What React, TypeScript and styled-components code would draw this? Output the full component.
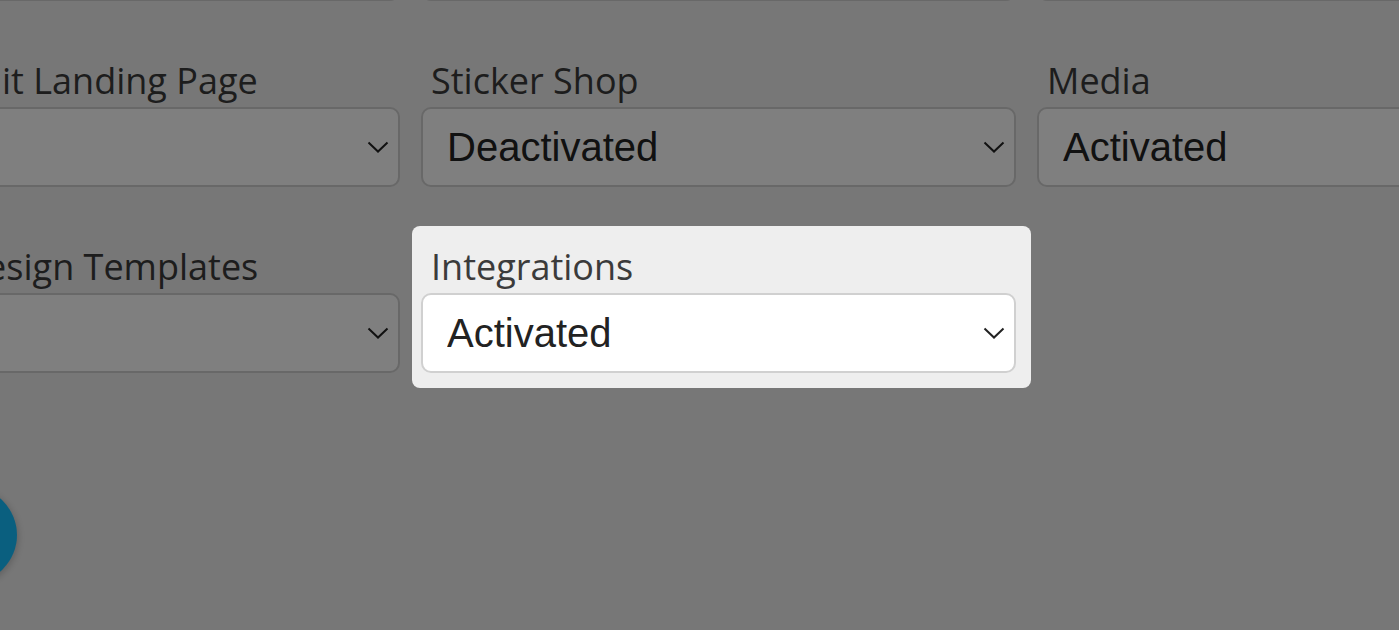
import React from "react";
import styled, { createGlobalStyle } from "styled-components";

const Global = createGlobalStyle`
  html, body {
    margin: 0;
    padding: 0;
    width: 100%;
    height: 100%;
    overflow: hidden;
    background: #eeeeee;
  }
  * { box-sizing: border-box; }
`;

const Page = styled.div`
  width: 1399px;
  height: 630px;
  overflow: hidden;
  position: relative;
  background: #eeeeee;
`;

const Grid = styled.div`
  display: grid;
  grid-template-columns: 450px 595px 595px;
  column-gap: 21px;
  row-gap: 57px;
  margin-left: -50px;
  margin-top: -128px;
  width: max-content;
`;

const Field = styled.div<{ $spot?: boolean }>`
  display: flex;
  flex-direction: column;
  gap: 4px;
  position: relative;
  ${(p) =>
    p.$spot &&
    `
    z-index: 20;
    isolation: isolate;
    &::before {
      content: "";
      position: absolute;
      top: -18px;
      left: -9px;
      right: -15px;
      bottom: -15px;
      background: #eeeeee;
      border-radius: 8px;
      z-index: -1;
    }
  `}
`;

const Label = styled.label`
  font-family: "Open Sans", "Noto Sans", sans-serif;
  font-size: 36px;
  line-height: 45px;
  height: 45px;
  color: #3b3b3b;
  padding-left: 10px;
  white-space: nowrap;
`;

const SelectWrap = styled.div`
  position: relative;
  height: 80px;
`;

const Select = styled.select`
  appearance: none;
  -webkit-appearance: none;
  width: 100%;
  height: 80px;
  margin: 0;
  padding: 0 60px 0 24px;
  border: 2px solid #d0d0d0;
  border-radius: 10px;
  background: #ffffff;
  font-family: "Liberation Sans", Arial, sans-serif;
  font-size: 40px;
  color: #222222;
  outline: none;
`;

const Chevron = styled.svg`
  position: absolute;
  right: 11px;
  top: 50%;
  width: 22px;
  height: 12px;
  margin-top: -6px;
  pointer-events: none;
`;

const Overlay = styled.div`
  position: fixed;
  inset: 0;
  background: rgba(0, 0, 0, 0.5);
  z-index: 10;
`;

const HelpButton = styled.button`
  position: fixed;
  left: -79px;
  top: 487px;
  width: 96px;
  height: 96px;
  border-radius: 50%;
  border: none;
  background: #15beff;
  box-shadow: 0 2px 8px rgba(0, 0, 0, 0.25);
  z-index: 5;
`;

type F = { label: string; value: string; spot?: boolean };

const rows: (F | null)[][] = [
  [
    { label: "", value: "" },
    { label: "", value: "" },
    { label: "", value: "" },
  ],
  [
    { label: "Edit Landing Page", value: "" },
    { label: "Sticker Shop", value: "Deactivated" },
    { label: "Media", value: "Activated" },
  ],
  [
    { label: "Design Templates", value: "" },
    { label: "Integrations", value: "Activated", spot: true },
    null,
  ],
];

function SelectField({ f }: { f: F }) {
  return (
    <Field $spot={f.spot}>
      <Label>{f.label}</Label>
      <SelectWrap>
        <Select defaultValue={f.value}>
          <option value=""></option>
          <option value="Activated">Activated</option>
          <option value="Deactivated">Deactivated</option>
        </Select>
        <Chevron viewBox="0 0 22 12">
          <path d="M1.5 1.5 L11 10.5 L20.5 1.5" fill="none" stroke="#222" strokeWidth="2" />
        </Chevron>
      </SelectWrap>
    </Field>
  );
}

export default function App() {
  return (
    <Page>
      <Global />
      <Grid>
        {rows.flatMap((r, i) =>
          r.map((f, j) => (f ? <SelectField key={`${i}-${j}`} f={f} /> : <div key={`${i}-${j}`} />))
        )}
      </Grid>
      <HelpButton aria-label="Help" />
      <Overlay />
    </Page>
  );
}
